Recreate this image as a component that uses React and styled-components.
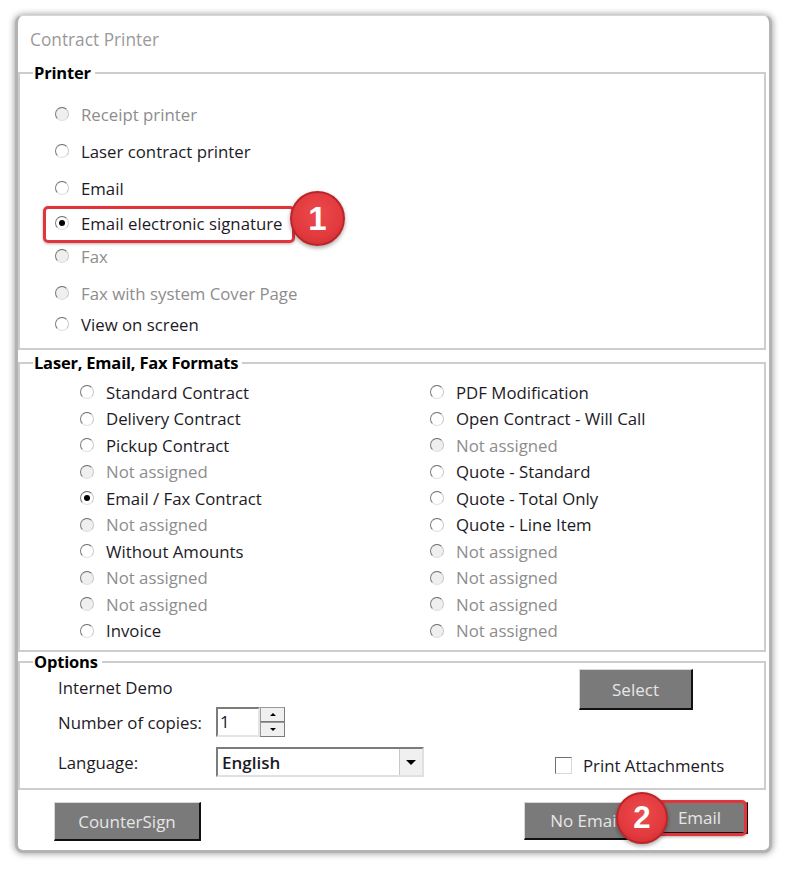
import React from 'react';
import styled, {createGlobalStyle} from 'styled-components';

const Global = createGlobalStyle`
    html, body {
        margin: 0;
        padding: 0;
        background: #ffffff;
    }
    body {
        font-family: "Open Sans", "Noto Sans", sans-serif;
    }
`;

const Page = styled.div`
    width: 786px;
    height: 870px;
    padding: 15px 0 0 15px;
    box-sizing: border-box;
    background: #ffffff;
`;

const Dialog = styled.div`
    position: relative;
    width: 757px;
    height: 838px;
    box-sizing: border-box;
    background: #ffffff;
    border: 3px solid #b3b3b3;
    border-top: 1px solid #d6d6d6;
    border-radius: 8px;
    box-shadow: 0 0 6px 1px rgba(0, 0, 0, 0.35);
    display: flex;
    flex-direction: column;
`;

const Title = styled.div`
    height: 22px;
    line-height: 22px;
    margin: 13px 0 13px 12px;
    font-size: 17.3px;
    color: #9a9a9a;
`;

const Group = styled.fieldset`
    margin: ${props => props.top || 0}px 3px 0 0;
    padding: ${props => props.pad};
    border: 2px solid #cdcdcd;
    border-radius: 0;
    min-width: 0;
`;

const Legend = styled.legend`
    margin-left: 13px;
    padding: 0 4px 0 1px;
    font-size: 16.5px;
    font-weight: 700;
    line-height: 18px;
    color: #000000;
    letter-spacing: -0.2px;
`;

const PrinterList = styled.div`
    display: flex;
    flex-direction: column;
    padding: 17px 0 0 35px;
`;

const Row = styled.div`
    display: flex;
    align-items: center;
    height: ${props => props.h || 30}px;
    margin-top: ${props => props.gap || 0}px;
    gap: 12px;
    font-size: 16.8px;
    color: ${props => props.disabled ? '#8d8d8d' : '#1d1a26'};
    white-space: nowrap;
`;

const Dot = styled.span`
    position: relative;
    flex: none;
    width: 12px;
    height: 12px;
    border-radius: 50%;
    border: 1px solid;
    border-color: #6a6a6a #c9c9c9 #e0e0e0 #7a7a7a;
    background: ${props => props.disabled ? '#efefef' : '#ffffff'};

    &::after {
        content: '';
        display: ${props => props.checked ? 'block' : 'none'};
        position: absolute;
        left: 3px;
        top: 3px;
        width: 6px;
        height: 6px;
        border-radius: 50%;
        background: #000000;
    }
`;

const FormatGrid = styled.div`
    display: grid;
    grid-template-columns: 350px 1fr;
    grid-template-rows: repeat(10, 26.5px);
    grid-auto-flow: column;
    padding: 7px 0 0 60px;
`;

const OptionsBody = styled.div`
    display: flex;
    justify-content: space-between;
    padding: 0 44px 0 38px;
`;

const LeftCol = styled.div`
    display: flex;
    flex-direction: column;
    padding-top: 5px;
`;

const Field = styled.div`
    display: flex;
    align-items: center;
    height: ${props => props.h}px;
    margin-top: ${props => props.gap || 0}px;
    font-size: 16.8px;
    color: #1d1a26;
`;

const FieldLabel = styled.span`
    width: 158px;
    flex: none;
`;

const Input = styled.div`
    width: 38px;
    height: 26px;
    border: 2px solid;
    border-color: #7c7c7c #e4e4e4 #e4e4e4 #7c7c7c;
    line-height: 26px;
    padding-left: 2px;
    font-size: 16.8px;
    background: #ffffff;
`;

const Spinner = styled.div`
    display: flex;
    flex-direction: column;
    width: 25px;
    height: 30px;
`;

const SpinButton = styled.div`
    flex: 1;
    box-sizing: border-box;
    border: 1px solid;
    border-color: #9a9a9a #7a7a7a #7a7a7a #9a9a9a;
    background: #f0f0f0;
    display: flex;
    align-items: center;
    justify-content: center;

    &::before {
        content: '';
        border-left: 3px solid transparent;
        border-right: 3px solid transparent;
        border-${props => props.up ? 'bottom' : 'top'}: 3px solid #000000;
    }
`;

const Select = styled.div`
    display: flex;
    align-items: center;
    width: 208px;
    height: 30px;
    box-sizing: border-box;
    border: 2px solid;
    border-color: #7c7c7c #e0e0e0 #e0e0e0 #7c7c7c;
    background: #ffffff;
`;

const SelectText = styled.span`
    flex: 1;
    padding-left: 4px;
    font-size: 17px;
    font-weight: 600;
    color: #1d1a26;
`;

const Arrow = styled.span`
    width: 23px;
    height: 100%;
    box-sizing: border-box;
    border-left: 1px solid #c8c8c8;
    background: #f0f0f0;
    display: flex;
    align-items: center;
    justify-content: center;

    &::before {
        content: '';
        border-left: 5px solid transparent;
        border-right: 5px solid transparent;
        border-top: 5px solid #000000;
    }
`;

const RightCol = styled.div`
    display: flex;
    flex-direction: column;
    align-items: flex-start;
    width: 165px;
    margin-top: -2px;
`;

const CheckRow = styled.div`
    display: flex;
    align-items: center;
    gap: 11px;
    margin-top: 44px;
    font-size: 16.8px;
    color: #1d1a26;
    white-space: nowrap;
`;

const Box = styled.span`
    flex: none;
    width: 15px;
    height: 15px;
    border: 1px solid;
    border-color: #6f6f6f #d8d8d8 #d8d8d8 #6f6f6f;
    background: #ffffff;
`;

const Button = styled.div`
    position: relative;
    flex: none;
    width: ${props => props.w}px;
    height: ${props => props.h || 38}px;
    margin-left: ${props => props.ml || 0}px;
    box-sizing: border-box;
    background: #7a7a7a;
    border: 1px solid;
    border-color: #d8d8d8 #111111 #111111 #d8d8d8;
    border-width: 1px 2px 2px 1px;
    display: flex;
    align-items: center;
    justify-content: center;
    font-size: 17px;
    color: #e6e6e6;
`;

const Footer = styled.div`
    display: flex;
    justify-content: space-between;
    align-items: flex-start;
    padding: 12px 21px 0 36px;
`;

const FooterRight = styled.div`
    display: flex;
    align-items: flex-start;
    gap: 4px;
`;

const Highlight = styled.div`
    position: absolute;
    left: ${props => props.x}px;
    top: ${props => props.y}px;
    width: ${props => props.w}px;
    height: ${props => props.h}px;
    border: 3px solid #e2353b;
    border-radius: 5px;
    box-sizing: border-box;
    box-shadow: 0 1px 3px rgba(0, 0, 0, 0.3);
    pointer-events: none;
`;

const Badge = styled.div`
    position: absolute;
    left: ${props => props.x}px;
    top: ${props => props.y}px;
    width: ${props => props.d}px;
    height: ${props => props.d}px;
    border-radius: 50%;
    box-sizing: border-box;
    background: radial-gradient(circle at 50% 40%, #ec4a4c 0%, #e23a3e 60%, #c8282d 100%);
    border: 2px solid #b92529;
    box-shadow: 0 2px 4px rgba(0, 0, 0, 0.35);
    color: #ffffff;
    font-family: "Liberation Sans", Arial, sans-serif;
    font-weight: 700;
    font-size: ${props => props.d * 0.6}px;
    display: flex;
    align-items: center;
    justify-content: center;
`;

const printers = [
    {label: 'Receipt printer', disabled: true, gap: 0},
    {label: 'Laser contract printer', gap: 7},
    {label: 'Email', gap: 7},
    {label: 'Email electronic signature', checked: true, gap: 5},
    {label: 'Fax', disabled: true, gap: 3},
    {label: 'Fax with system Cover Page', disabled: true, gap: 7},
    {label: 'View on screen', gap: 1},
];

const formats = [
    {label: 'Standard Contract'},
    {label: 'Delivery Contract'},
    {label: 'Pickup Contract'},
    {label: 'Not assigned', disabled: true},
    {label: 'Email / Fax Contract', checked: true},
    {label: 'Not assigned', disabled: true},
    {label: 'Without Amounts'},
    {label: 'Not assigned', disabled: true},
    {label: 'Not assigned', disabled: true},
    {label: 'Invoice'},
    {label: 'PDF Modification'},
    {label: 'Open Contract - Will Call'},
    {label: 'Not assigned', disabled: true},
    {label: 'Quote - Standard'},
    {label: 'Quote - Total Only'},
    {label: 'Quote - Line Item'},
    {label: 'Not assigned', disabled: true},
    {label: 'Not assigned', disabled: true},
    {label: 'Not assigned', disabled: true},
    {label: 'Not assigned', disabled: true},
];

const Radio = ({label, disabled, checked, gap, h}) => (
    <Row disabled={disabled} gap={gap} h={h}>
        <Dot disabled={disabled} checked={checked} />
        {label}
    </Row>
);

const App = () => {
    return <Page>
        <Global />
        <Dialog>
            <Title>Contract Printer</Title>

            <Group pad="0 0 9px 0">
                <Legend>Printer</Legend>
                <PrinterList>
                    {printers.map((p, i) => <Radio key={i} {...p} />)}
                </PrinterList>
            </Group>

            <Group pad="0 0 6px 0" top={4}>
                <Legend>Laser, Email, Fax Formats</Legend>
                <FormatGrid>
                    {formats.map((f, i) => <Radio key={i} h={26.5} {...f} />)}
                </FormatGrid>
            </Group>

            <Group pad="0 0 11px 0" top={1}>
                <Legend>Options</Legend>
                <OptionsBody>
                    <LeftCol>
                        <Field h={22}>Internet Demo</Field>
                        <Field h={30} gap={9}>
                            <FieldLabel>Number of copies:</FieldLabel>
                            <Input>1</Input>
                            <Spinner>
                                <SpinButton up />
                                <SpinButton />
                            </Spinner>
                        </Field>
                        <Field h={30} gap={10}>
                            <FieldLabel>Language:</FieldLabel>
                            <Select>
                                <SelectText>English</SelectText>
                                <Arrow />
                            </Select>
                        </Field>
                    </LeftCol>
                    <RightCol>
                        <Button w={114} h={41} ml={24}>Select</Button>
                        <CheckRow>
                            <Box />
                            Print Attachments
                        </CheckRow>
                    </RightCol>
                </OptionsBody>
            </Group>

            <Footer>
                <Button w={147} h={39}>CounterSign</Button>
                <FooterRight>
                    <Button w={124} h={38}>No Email</Button>
                    <Button w={96} h={32}>
                        Email
                        <Highlight x={-18} y={-3} w={112} h={36} />
                    </Button>
                </FooterRight>
            </Footer>

            <Highlight x={25} y={190} w={252} h={37} />
            <Badge x={272} y={175} d={55}>1</Badge>
            <Badge x={598} y={776} d={52}>2</Badge>
        </Dialog>
    </Page>;
};

export default App;
